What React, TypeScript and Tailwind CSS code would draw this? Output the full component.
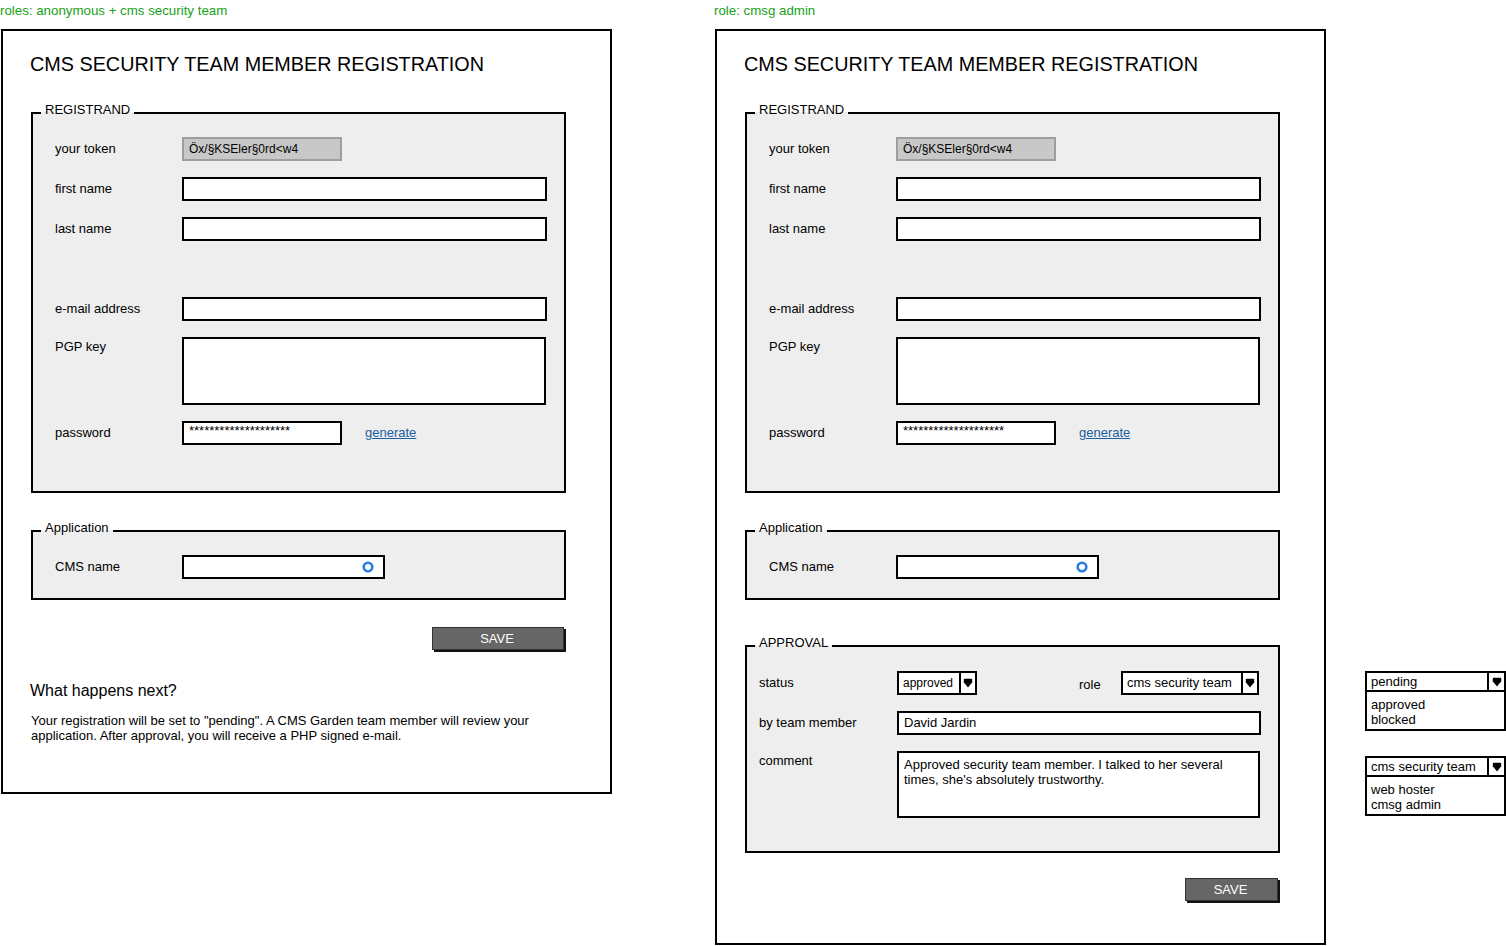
import React from 'react';

function Arrow() {
  return (
    <svg width="10" height="10" viewBox="0 0 10 10">
      <path d="M0.8 1.8 Q0.8 0.8 1.8 0.8 H8.2 Q9.2 0.8 9.2 1.8 V4.2 L5 9.4 L0.8 4.2 Z" fill="#000" />
    </svg>
  );
}

function Ring() {
  return (
    <svg width="12" height="12" viewBox="0 0 12 12">
      <circle cx="6" cy="6" r="4.3" fill="none" stroke="#2a7de1" strokeWidth="2.6" />
    </svg>
  );
}

function Fieldset({ title, className, children }: { title: string; className: string; children: React.ReactNode }) {
  return (
    <fieldset className={`w-[535px] border-2 border-black bg-[#eeeeee] ${className}`}>
      <legend className="ml-[8px] px-[4px] pb-[6px] text-[13px] leading-[16px]">{title}</legend>
      {children}
    </fieldset>
  );
}

function Row({ label, labelW = 'w-[127px]', top, children }: { label: string; labelW?: string; top?: boolean; children?: React.ReactNode }) {
  return (
    <div className={`flex ${top ? 'items-start' : 'items-center min-h-[24px]'}`}>
      <div className={`${labelW} shrink-0 text-[13px] leading-[16px] ${top ? 'pt-[2px]' : ''}`}>{label}</div>
      {children}
    </div>
  );
}

function Input({ className = 'w-[365px]', children }: { className?: string; children?: React.ReactNode }) {
  return (
    <div className={`flex h-[24px] items-center border-2 border-black bg-white pl-[5px] text-[13px] ${className}`}>
      {children}
    </div>
  );
}

function Select({ value, className }: { value: string; className: string }) {
  return (
    <div className={`flex h-[24px] border-2 border-black bg-white ${className}`}>
      <div className="flex flex-1 items-center pl-[4px] text-[13px]">{value}</div>
      <div className="flex w-[16px] items-center justify-center border-l-2 border-black">
        <Arrow />
      </div>
    </div>
  );
}

function OpenSelect({ value, options, className = '' }: { value: string; options: string[]; className?: string }) {
  return (
    <div className={`w-[141px] border-2 border-black bg-white ${className}`}>
      <div className="flex h-[19px] border-b-2 border-black">
        <div className="flex flex-1 items-center pl-[4px] text-[13px]">{value}</div>
        <div className="flex w-[17px] items-center justify-center border-l-2 border-black">
          <Arrow />
        </div>
      </div>
      <div className="px-[4px] pt-[5px] pb-[2px] text-[13px] leading-[15px]">
        {options.map((o) => (
          <div key={o}>{o}</div>
        ))}
      </div>
    </div>
  );
}

function Panel({ label, admin }: { label: string; admin?: boolean }) {
  return (
    <div className="w-[612px] shrink-0">
      <div className="h-[29px] pt-[3px] text-[13.3px] leading-[16px] text-[#17a117]">{label}</div>
      <div className={`ml-px w-[611px] border-2 border-black px-[28px] pt-[21px] ${admin ? 'h-[916px]' : 'h-[765px]'}`}>
        <h1 className="-ml-px text-[19.8px] leading-[24px]">CMS SECURITY TEAM MEMBER REGISTRATION</h1>

        <Fieldset title="REGISTRAND" className="mt-[26px]">
          <div className="flex flex-col gap-[16px] pl-[22px] pr-[17px] pt-[13px] pb-[46px]">
            <Row label="your token">
              <div className="flex h-[24px] w-[160px] items-center border-2 border-[#9e9e9e] bg-[#c8c8c8] pl-[5px] text-[12px]">
                Öx/§KSEler§0rd&lt;w4
              </div>
            </Row>
            <Row label="first name">
              <Input />
            </Row>
            <Row label="last name">
              <Input />
            </Row>
            <div className="h-[24px]" />
            <Row label="e-mail address">
              <Input />
            </Row>
            <Row label="PGP key" top>
              <div className="h-[68px] w-[364px] border-2 border-black bg-white" />
            </Row>
            <Row label="password">
              <Input className="w-[160px]">
                <span className="-mt-[4px]">********************</span>
              </Input>
              <a href="#" className="ml-[23px] text-[13px] text-[#1b5da0] underline">
                generate
              </a>
            </Row>
          </div>
        </Fieldset>

        <Fieldset title="Application" className="mt-[27px]">
          <div className="pl-[22px] pr-[17px] pt-[13px] pb-[19px]">
            <Row label="CMS name">
              <Input className="w-[203px] justify-end pr-[9px]">
                <Ring />
              </Input>
            </Row>
          </div>
        </Fieldset>

        {admin && (
          <Fieldset title="APPROVAL" className="mt-[35px]">
            <div className="flex flex-col gap-[16px] pl-[12px] pr-[17px] pt-[14px] pb-[33px]">
              <Row label="status" labelW="w-[138px]">
                <Select value="approved" className="w-[80px] [&>div:first-child]:text-[12px]" />
                <div className="ml-[102px] w-[42px] pt-[3px] text-[13px]">role</div>
                <Select value="cms security team" className="w-[138px]" />
              </Row>
              <Row label="by team member" labelW="w-[138px]">
                <Input className="w-[364px] pl-[4px] text-[12.5px]">David Jardin</Input>
              </Row>
              <Row label="comment" labelW="w-[138px]" top>
                <div className="h-[67px] w-[363px] border-2 border-black bg-white pl-[5px] pt-[4px] text-[13px] leading-[15px]">
                  Approved security team member. I talked to her several times, she's absolutely trustworthy.
                </div>
              </Row>
            </div>
          </Fieldset>
        )}

        <div className={`flex w-[535px] justify-end ${admin ? 'mt-[25px]' : 'mt-[27px]'}`}>
          <button
            className={`h-[23px] border border-[#333] bg-[#666666] pr-[2px] text-[13px] leading-[20px] text-white shadow-[2px_2px_0_#111] ${admin ? 'mr-[2px] w-[93px]' : 'mr-[2px] w-[132px]'}`}
          >
            SAVE
          </button>
        </div>

        {!admin && (
          <div>
            <h2 className="mt-[31px] -ml-px text-[16px] leading-[20px]">What happens next?</h2>
            <p className="mt-[12px] w-[520px] text-[13px] leading-[15px]">
              Your registration will be set to "pending". A CMS Garden team member will review your application. After approval, you will receive a PHP signed e-mail.
            </p>
          </div>
        )}
      </div>
    </div>
  );
}

export default function App() {
  return (
    <div className="flex min-h-[946px] bg-white text-black font-['Liberation_Sans',Arial,sans-serif]">
      <Panel label="roles: anonymous + cms security team" />
      <div className="ml-[102px]">
        <Panel label="role: cmsg admin" admin />
      </div>
      <div className="ml-[39px] w-[141px] shrink-0 pt-[671px]">
        <OpenSelect value="pending" options={['approved', 'blocked']} />
        <OpenSelect value="cms security team" options={['web hoster', 'cmsg admin']} className="mt-[25px]" />
      </div>
    </div>
  );
}
